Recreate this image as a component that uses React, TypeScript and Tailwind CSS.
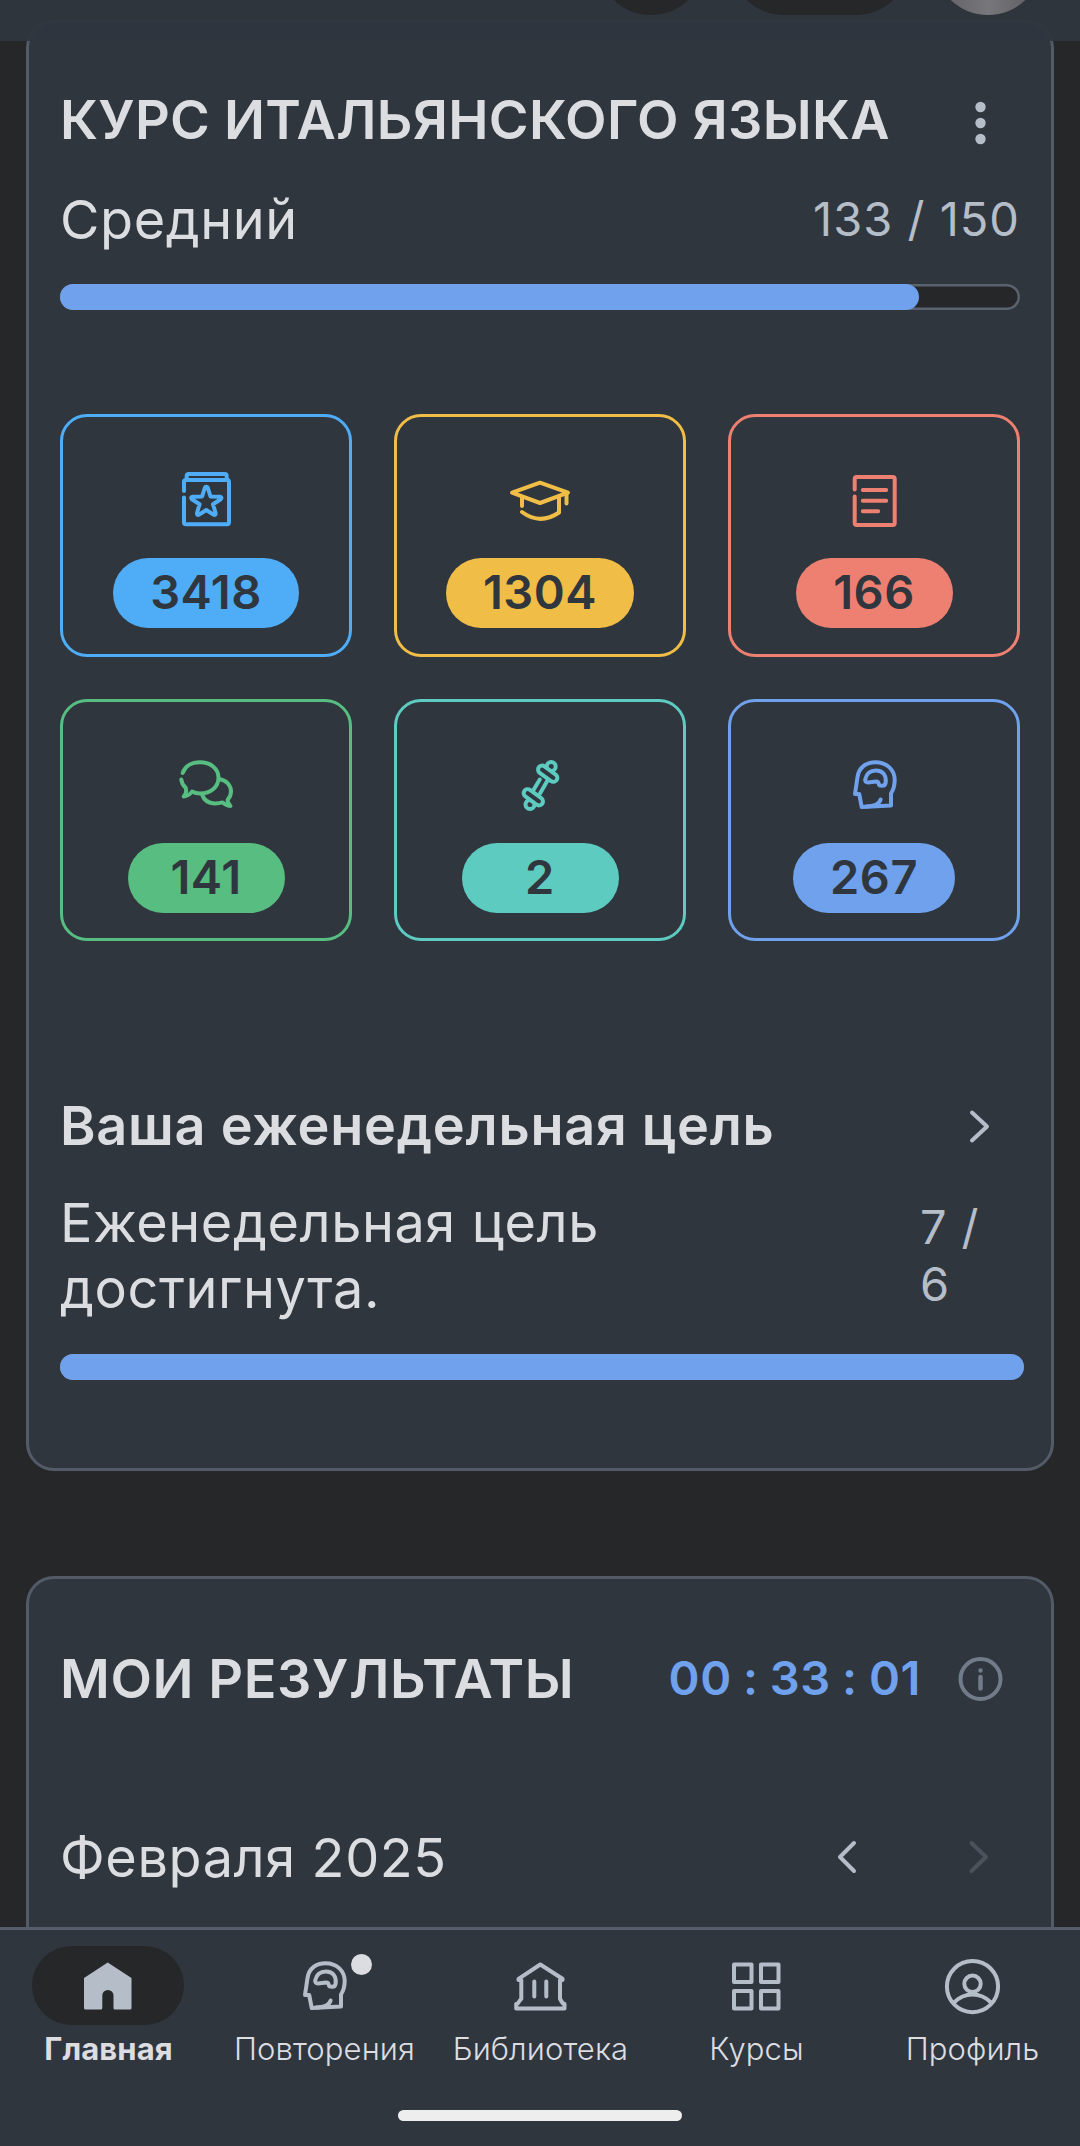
import type { ReactNode } from "react";
import { clsx } from "clsx";

interface IconProps {
  children: ReactNode;
  className?: string;
}

const Icon = ({ children, className }: IconProps) => (
  <svg
    viewBox="0 0 64 64"
    fill="none"
    stroke="currentColor"
    strokeWidth={4}
    strokeLinecap="round"
    strokeLinejoin="round"
    className={clsx("h-16 w-16 shrink-0", className)}
  >
    {children}
  </svg>
);

const WordsIcon = () => (
  <Icon>
    <path d="M10 23V14q0-2 2-2H53q2 0 2 2V54.3q0 2-2 2H12q-2 0-2-2V29.5" />
    <path d="M12.7 11V8q0-2 2-2H50.7q2 0 2 2V11" />
    <path d="M32.3 18.8q1.2 0 1.7 1.7L36.5 28.5l9.4.3q2.6.4.8 2.5L39 36.3l2.6 8.7q.2 2.6-2.1 1.7L32.3 42 25.1 46.7q-2.3.9-2.1-1.7L25.6 36.3 17.9 31.3q-1.8-2.1.8-2.5L28.1 28.5l2.5-8q.5-1.7 1.7-1.7Z" />
  </Icon>
);

const GrammarIcon = () => (
  <Icon>
    <path d="M32 14.7 60 24.7 32 35 4 24.7Z" />
    <path d="M58.5 26V35.5M14 29.5V38M14 44q18 13.5 37 .5V29.5" />
  </Icon>
);

const TextsIcon = () => (
  <Icon>
    <path d="M12.7 21.5V11q0-2 2-2H50.7q2 0 2 2V55q0 2-2 2H14.7q-2 0-2-2V28.5" />
    <path d="M20.8 22H44.2M20.8 32.7H44.2M20.8 43.3H36.2" />
  </Icon>
);

const DialogsIcon = () => (
  <Icon>
    <path d="M8.7 20C11 13 18 9.3 26 9.3c11 0 18.5 6.5 18.5 15.5S37 40.5 26 40.5q-4.5 0-8-2-3 4.5-8.3 5Q13.5 40 11.5 34.5 7.7 31 7.3 26.5" />
    <path d="M46 26.3c6.5 1 11 6.2 11 12.2q0 4.5-3.5 8.5.3 3.500 3 6-5-.5-8-3.600-3.500 1.100-8 1Q31 50 28.300 42" />
  </Icon>
);

const DumbbellIcon = () => (
  <Icon>
    <circle cx="43.2" cy="13.5" r="4.5" />
    <circle cx="22" cy="51.5" r="4.5" />
    <path d="M31.8 26.5 25.5 37M39.8 27 32 40.5" />
    <rect x="28.7" y="16.7" width="22" height="8" rx="4" transform="rotate(36 39.7 20.7)" className="fill-[#2f363e]" />
    <rect x="14.3" y="40.3" width="22" height="8" rx="4" transform="rotate(36 25.3 44.3)" className="fill-[#2f363e]" />
  </Icon>
);

const HeadIcon = () => (
  <Icon>
    <path d="M19.7 54 17.2 41H13L15.5 24C17 14 24.5 9.2 33.5 9.2 45 9.2 52.7 17 52.7 27c0 5.5-1.2 9.5-3.7 13.5V52.5Z" />
    <path d="M38.6 46.5Q37 53 24 53.5" />
    <path d="M26 29.5Q22.8 29.5 23.2 26.5 25 17.5 34 17.5c7 0 10.5 5 9.7 12Q43 33 40 32.8q-3 0-3.2-1.800-.3-2.500-2.800-2.500Z" />
  </Icon>
);

const HomeIcon = () => (
  <Icon>
    <path
      d="M31.7 8.5 55.5 24V54q0 1.5-1.5 1.5H39q-1.5 0-1.5-1.5V41.5a5.6 5.6 0 0 0-11.2 0V54q0 1.5-1.5 1.5H9.5Q8 55.5 8 54V24Z"
      fill="currentColor"
      stroke="none"
    />
  </Icon>
);

const LibraryIcon = () => (
  <Icon>
    <path d="M13.3 26H10.5V24.8L32.3 10.5 54.5 24.8V26H52V44.8L53.2 47 55 49.5 56.5 50V54.5H8.2V50L9.8 49.5 11.5 47 13.3 44.8Z" />
    <path d="M26.3 27.5V42.5M38.3 27.5V42.5" />
  </Icon>
);

const CoursesIcon = () => (
  <Icon>
    <path d="M10 10.5H27.5V28H10ZM37 10.5H54.5V28H37ZM10 37H27.5V54.5H10ZM37 37H54.5V54.5H37Z" />
  </Icon>
);

const ProfileIcon = () => (
  <Icon>
    <circle cx="32.5" cy="32.6" r="25.6" />
    <circle cx="32.5" cy="29.8" r="8.2" />
    <path d="M14 48.5Q22 40.5 32.5 40.5T51 48.5" />
  </Icon>
);

const Chevron = ({ points, className }: { points: string; className?: string }) => (
  <svg
    viewBox="0 0 80 66"
    fill="none"
    stroke="currentColor"
    strokeWidth={4}
    strokeLinecap="round"
    strokeLinejoin="round"
    className={clsx("h-[66px] w-20 shrink-0", className)}
  >
    <polyline points={points} />
  </svg>
);

const ProgressBar = ({ percent }: { percent: number }) => (
  <div className="h-[26px] rounded-full bg-[#262729] shadow-[inset_0_0_0_2.5px_#5a6270]">
    <div className="h-full rounded-full bg-[#70a1ed]" style={{ width: `${percent}%` }} />
  </div>
);

const stats = [
  { id: "words", value: 3418, icon: <WordsIcon />, tone: "border-[#4fadf7] text-[#4fadf7]", pill: "bg-[#4fadf7]" },
  { id: "grammar", value: 1304, icon: <GrammarIcon />, tone: "border-[#f0bd47] text-[#f0bd47]", pill: "bg-[#f0bd47]" },
  { id: "texts", value: 166, icon: <TextsIcon />, tone: "border-[#ed8071] text-[#ed8071]", pill: "bg-[#ed8071]" },
  { id: "dialogs", value: 141, icon: <DialogsIcon />, tone: "border-[#57bd80] text-[#57bd80]", pill: "bg-[#57bd80]" },
  { id: "exercises", value: 2, icon: <DumbbellIcon />, tone: "border-[#5dcbc0] text-[#5dcbc0]", pill: "bg-[#5dcbc0]" },
  { id: "reviews", value: 267, icon: <HeadIcon />, tone: "border-[#70a1ed] text-[#70a1ed]", pill: "bg-[#70a1ed]" },
];

const tabs = [
  { label: "Главная", icon: <HomeIcon />, active: true },
  { label: "Повторения", icon: <HeadIcon />, badge: true },
  { label: "Библиотека", icon: <LibraryIcon /> },
  { label: "Курсы", icon: <CoursesIcon /> },
  { label: "Профиль", icon: <ProfileIcon /> },
];

const CourseCard = () => (
  <section className="rounded-[28px] border-3 border-[#535b68] bg-[#2f363e] px-[31px] pt-16 pb-[88px]">
    <div className="flex items-center justify-between">
      <h1 className="text-[54px] leading-[66px] font-semibold tracking-[0.3px] whitespace-nowrap">
        КУРС ИТАЛЬЯНСКОГО ЯЗЫКА
      </h1>
      <svg viewBox="0 0 80 66" fill="currentColor" className="h-[66px] w-20 shrink-0 text-[#b5bdc9]">
        <circle cx="40.5" cy="20" r="5.2" />
        <circle cx="40.5" cy="36" r="5.2" />
        <circle cx="40.5" cy="52" r="5.2" />
      </svg>
    </div>
    <div className="mt-[34px] mb-[31px] flex items-center justify-between">
      <span className="text-[54px] leading-[66px] tracking-[0.6px]">Средний</span>
      <span className="pb-0.5 text-[47px] leading-16 tracking-[1px] text-[#b5bdc9]">133 / 150</span>
    </div>
    <ProgressBar percent={89.5} />

    <div className="mt-[104px] grid grid-cols-3 grid-rows-[243px_242px] gap-[42px]">
      {stats.map((stat) => (
        <div
          key={stat.id}
          className={clsx("flex flex-col items-center rounded-[27px] border-3 pt-[51px]", stat.tone)}
        >
          {stat.icon}
          <div
            className={clsx(
              "mt-[26px] flex h-[70px] min-w-[157px] items-center justify-center rounded-full px-[37px] pb-[3px] text-[47px] leading-16 font-semibold tracking-[0.5px] text-[#2f363e]",
              stat.pill,
            )}
          >
            {stat.value}
          </div>
        </div>
      ))}
    </div>

    <div className="mt-[152px] flex items-center justify-between">
      <h2 className="text-[54px] leading-[66px] font-semibold tracking-[0.75px]">Ваша еженедельная цель</h2>
      <Chevron points="32,19.5 47,33.5 32,47.5" className="text-[#b5bdc9]" />
    </div>
    <div className="mt-[31px] mb-8 flex items-center justify-between">
      <p className="w-[700px] text-[54px] leading-[66px] tracking-[0.6px]">Еженедельная цель достигнута.</p>
      <p className="w-[100px] pb-0.5 text-[47px] leading-[57px] tracking-[0.9px] text-[#b5bdc9]">
        7 /<br />6
      </p>
    </div>
    <div className="-mr-1">
      <ProgressBar percent={100} />
    </div>
  </section>
);

const ResultsCard = () => (
  <section className="mt-[105px] h-[500px] rounded-[28px] border-3 border-[#535b68] bg-[#2f363e] px-[31px] pt-[67px]">
    <div className="flex items-center">
      <h2 className="mr-auto text-[54px] leading-[66px] font-semibold tracking-[0.6px]">МОИ РЕЗУЛЬТАТЫ</h2>
      <span className="mr-[19px] pb-0.5 text-[47px] leading-16 font-semibold tracking-[0.6px] text-[#70a1ed] [word-spacing:-1.2px]">
        00 : 33 : 01
      </span>
      <svg
        viewBox="0 0 80 66"
        fill="none"
        stroke="currentColor"
        strokeWidth={4}
        strokeLinecap="round"
        className="h-[66px] w-20 shrink-0 text-[#717b89]"
      >
        <circle cx="40.5" cy="33" r="20" />
        <path d="M40.5 31V42.5M40.5 24.5v.1" strokeWidth={4.5} />
      </svg>
    </div>
    <div className="mt-[113px] flex items-center">
      <span className="mr-auto text-[54px] leading-[66px] tracking-[0.6px]">Февраля 2025</span>
      <Chevron points="47,18 33,32 47,46" className="mr-[53px] text-[#b5bdc9]" />
      <Chevron points="31.5,18 46,32 31.5,46" className="text-[#4b525c]" />
    </div>
  </section>
);

const TabBar = () => (
  <nav className="h-[219px] shrink-0 border-t-[3px] border-[#565e6c] bg-[#2f363e] pt-4">
    <div className="grid grid-cols-5">
      {tabs.map((tab) => (
        <div key={tab.label} className="flex flex-col items-center gap-1">
          <div
            className={clsx(
              "relative flex h-[79px] w-[152px] items-center justify-center rounded-full text-[#b5bdc9]",
              tab.active && "bg-[#262729]",
            )}
          >
            {tab.icon}
            {tab.badge && <span className="absolute top-2 left-[103px] h-[21px] w-[21px] rounded-full bg-[#dcdde1]" />}
          </div>
          <span
            className={clsx(
              "pl-px text-[31px] leading-10",
              tab.active ? "font-bold tracking-[0.1px]" : "font-light tracking-[0.1px]",
            )}
          >
            {tab.label}
          </span>
        </div>
      ))}
    </div>
    <div className="mx-auto mt-[41px] h-[11px] w-[284px] rounded-full bg-[#eeeeef]" />
  </nav>
);

export default function App() {
  return (
    <div className="relative flex h-[2146px] w-[1080px] flex-col overflow-hidden bg-[#262729] font-['Inter',sans-serif] text-[#dcdde1]">
      {/* page header, scrolled mostly out of view */}
      <header className="absolute inset-x-0 top-0 z-10 h-[41px] overflow-hidden bg-[#2f363e]/95">
        <div className="absolute -top-[93px] left-[597px] h-[108px] w-[108px] rounded-full bg-[#262729]" />
        <div className="absolute -top-[93px] left-[730px] h-[108px] w-[180px] rounded-full bg-[#262729]" />
        <div className="absolute -top-[93px] left-[934px] h-[108px] w-[108px] rounded-full bg-linear-to-r from-[#5f5e62] via-[#77767a] to-[#5c5b5f]" />
      </header>
      <main className="min-h-0 flex-1 overflow-hidden px-[26px] pt-5">
        <CourseCard />
        <ResultsCard />
      </main>
      <TabBar />
    </div>
  );
}
